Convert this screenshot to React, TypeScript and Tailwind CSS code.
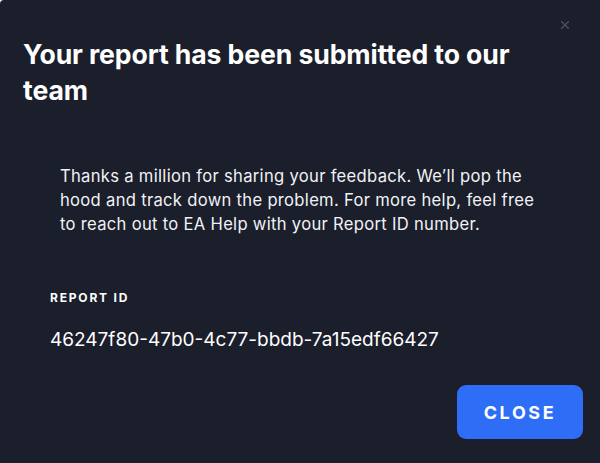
import { X } from "lucide-react";

const reportId = "46247f80-47b0-4c77-bbdb-7a15edf66427";

const ReportDialog = () => (
  <div className="relative h-[463px] w-[600px] overflow-hidden rounded-tl-[4px] bg-[#1b1e2b] font-['Inter',sans-serif] text-white">
    <button className="absolute right-[28px] top-[18px] text-[#4d5160]">
      <X className="h-[14px] w-[14px]" strokeWidth={2} />
    </button>

    <div className="flex h-full flex-col pl-[23px] pt-[36px]">
      <h2 className="w-[530px] text-[26.6px] font-bold leading-[36px] tracking-[-0.1px]">
        Your report has been submitted to our team
      </h2>

      <p className="ml-[37px] mt-[56px] w-[490px] text-[16.6px] leading-[24px] tracking-[0.3px] text-[#f1f2f5]">
        Thanks a million for sharing your feedback. We&rsquo;ll pop the hood and
        track down the problem. For more help, feel free to reach out to EA Help
        with your Report ID number.
      </p>

      <div className="ml-[27px] mt-[54px] flex flex-col gap-[22px]">
        <span className="text-[12px] font-bold uppercase leading-[16px] tracking-[1.8px]">
          Report ID
        </span>
        <span className="text-[19px] leading-[24px]">{reportId}</span>
      </div>

      <div className="mt-auto flex justify-end pb-[24px] pr-[17px]">
        <button className="flex h-[54px] w-[126px] items-center justify-center rounded-[9px] bg-[#2e6df6] text-[18px] font-bold uppercase tracking-[2.6px]">
          Close
        </button>
      </div>
    </div>
  </div>
);

export default function App() {
  return (
    <div className="bg-white">
      <ReportDialog />
    </div>
  );
}
